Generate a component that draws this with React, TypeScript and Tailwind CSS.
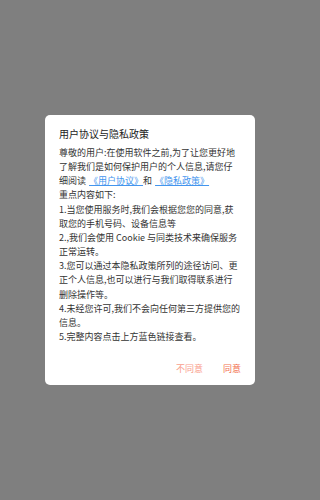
export default function App() {
  return (
    <div
      className="w-full min-h-screen bg-[#7f7f7f] pt-[115px] pl-[45px]"
      style={{ fontFamily: '"Noto Sans CJK SC", "Noto Sans", sans-serif' }}
    >
      <div className="w-[210px] h-[270px] bg-white rounded-[5px] flex flex-col">
        <h2 className="pt-[12px] px-[14px] text-[10px] leading-[14px] text-[#222]">用户协议与隐私政策</h2>
        <div className="mt-[5px] px-[14px] text-[9px] leading-[14.15px] text-[#333]">
          <p>
            尊敬的用户:在使用软件之前,为了让您更好地了解我们是如何保护用户的个人信息,请您仔细阅读
            <a className="pl-[3px] text-[#4395ee] underline underline-offset-1">《用户协议》</a>
            <span>和</span>
            <a className="pl-[3px] pr-[3px] text-[#4395ee] underline underline-offset-1">《隐私政策》</a>
          </p>
          <p>重点内容如下:</p>
          <p>1.当您使用服务时,我们会根据您您的同意,获取您的手机号码、设备信息等</p>
          <p>2.,我们会使用 Cookie 与同类技术来确保服务正常运转。</p>
          <p>3.您可以通过本隐私政策所列的途径访问、更正个人信息,也可以进行与我们取得联系进行删除操作等。</p>
          <p>4.未经您许可,我们不会向任何第三方提供您的信息。</p>
          <p>5.完整内容点击上方蓝色链接查看。</p>
        </div>
        <div className="mt-auto mb-[6px] px-[14px] flex justify-end items-center gap-[20px] h-[20px] text-[9px]">
          <button className="text-[#f9a08e]">不同意</button>
          <button className="text-[#f2714f]">同意</button>
        </div>
      </div>
    </div>
  );
}
